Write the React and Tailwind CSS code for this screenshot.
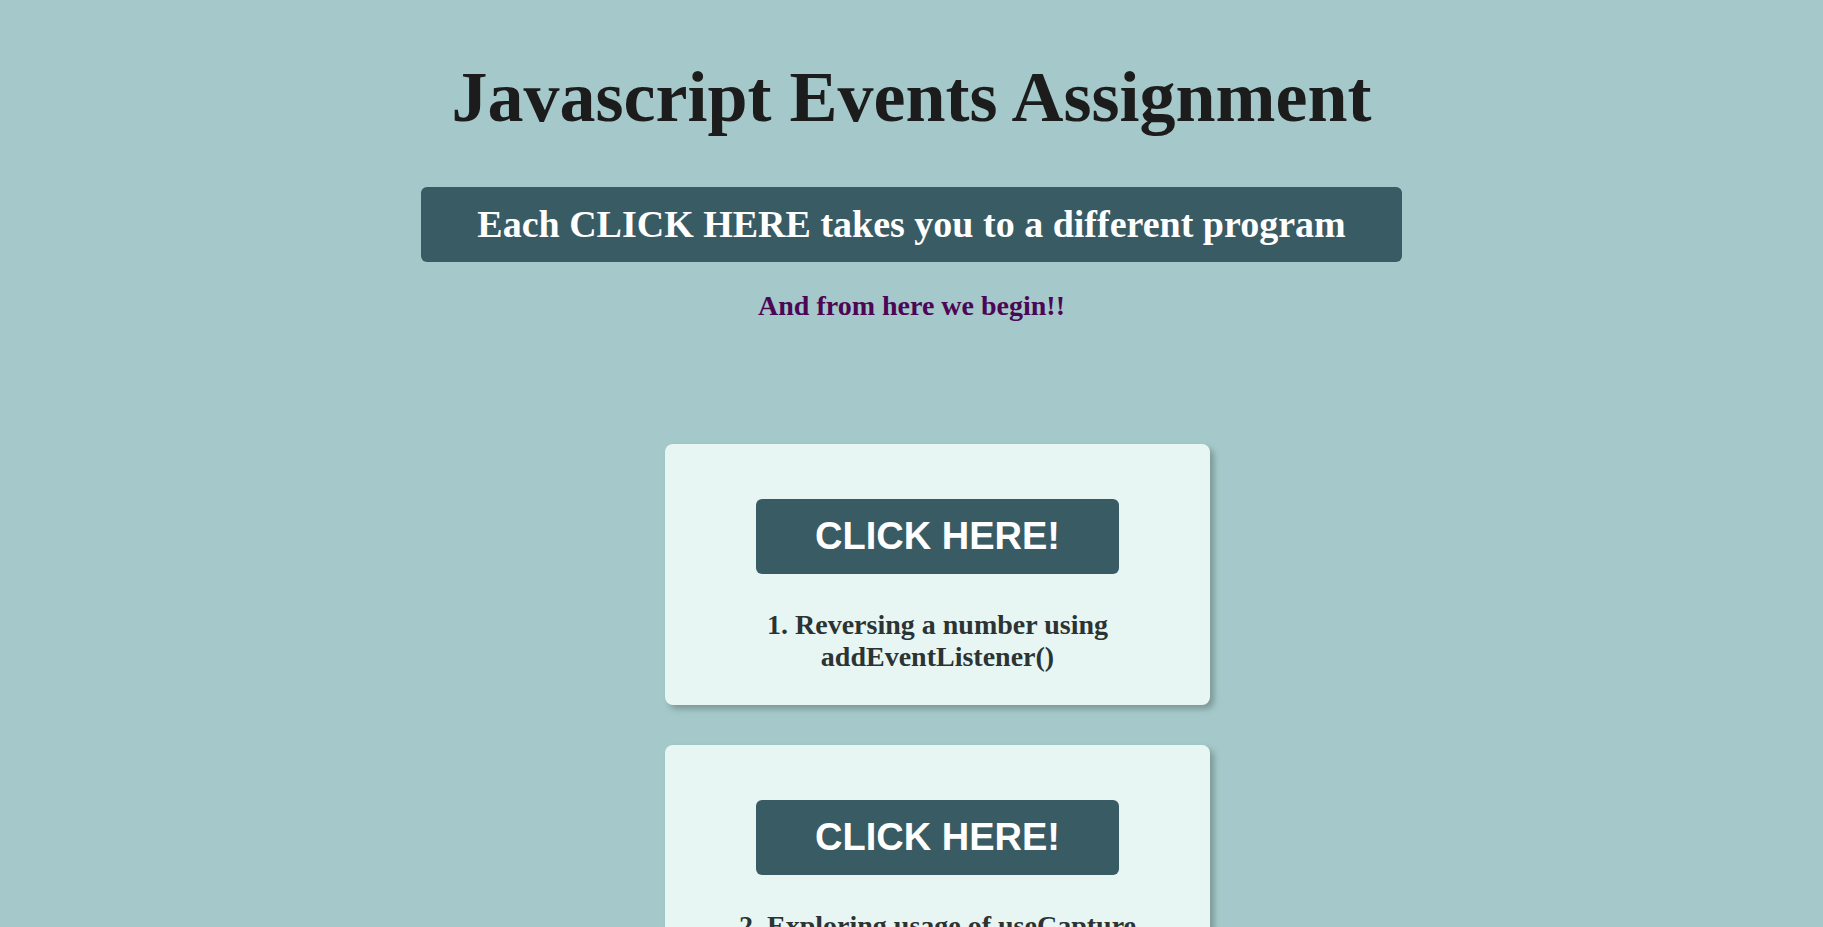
const programs = [
  '1. Reversing a number using addEventListener()',
  '2. Exploring usage of useCapture',
];

function ProgramCard({ title }) {
  return (
    <li className="flex w-full max-w-[545px] flex-col items-center rounded-lg bg-[#e7f6f2] px-12 pt-[55px] pb-8 shadow-[4px_4px_6px_#7c9796]">
      <button
        type="button"
        className="rounded-md bg-[#395b64] px-[59px] py-4 font-['Liberation_Sans',Arial,sans-serif] text-[38px] leading-[43px] font-bold text-white"
      >
        CLICK HERE!
      </button>
      <h3 className="mt-[35px] max-w-[400px] text-center text-[28px] leading-8 font-bold text-[#2c3333]">
        {title}
      </h3>
    </li>
  );
}

export default function App() {
  return (
    <main className="flex min-h-screen flex-col items-center bg-[#a5c9ca] pt-[54px] pb-10 font-['Liberation_Serif','Times_New_Roman',serif]">
      <h1 className="text-center text-[72px] leading-[86px] font-bold text-[#1c1c1c]">
        Javascript Events Assignment
      </h1>
      <h2 className="mt-[47px] rounded-md bg-[#395b64] px-14 py-4 text-center text-[38px] leading-[43px] font-bold text-white">
        Each CLICK HERE takes you to a different program
      </h2>
      <h3 className="mt-7 text-center text-[28px] leading-8 font-bold text-[#4c0655]">
        And from here we begin!!
      </h3>
      <ul className="mt-[122px] flex w-full flex-col items-center gap-10 pl-[52px]">
        {programs.map((title) => (
          <ProgramCard key={title} title={title} />
        ))}
      </ul>
    </main>
  );
}
